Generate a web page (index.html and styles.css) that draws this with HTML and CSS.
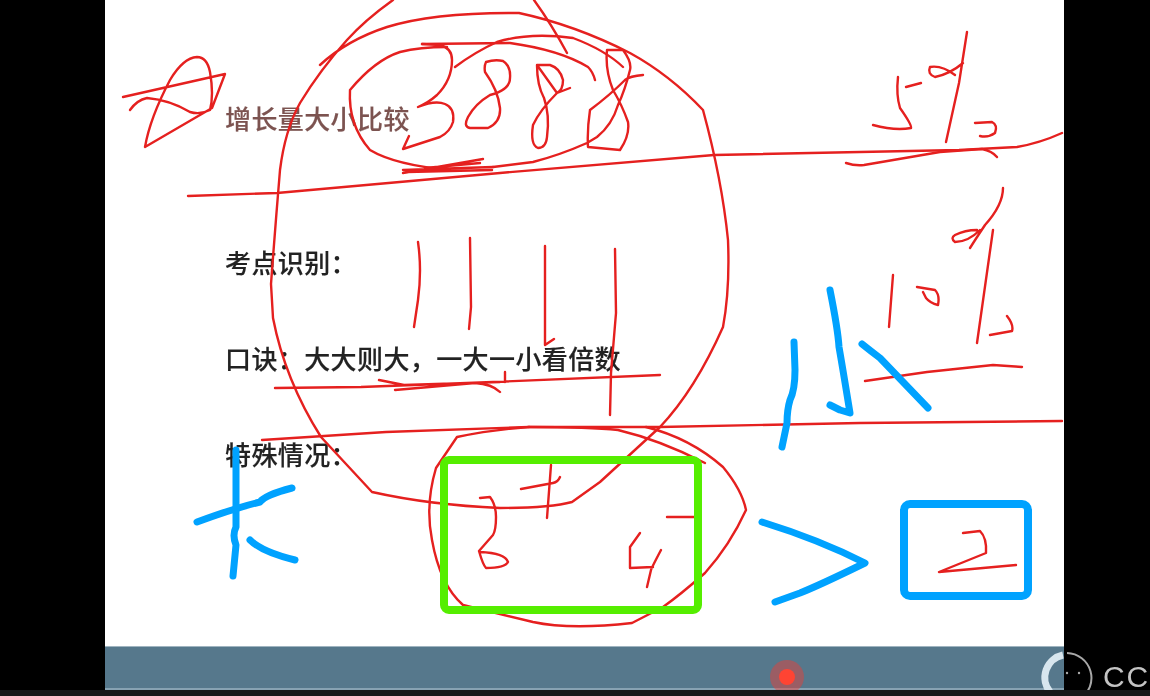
FILE: index.html
```html
<!DOCTYPE html>
<html lang="zh">
<head>
<meta charset="utf-8">
<title>增长量大小比较</title>
<link rel="stylesheet" href="styles.css">
</head>
<body>
<div class="stage">
  <main class="slide">
    <p class="line line-title">增长量大小比较</p>
    <p class="line">考点识别：</p>
    <p class="line">口诀：大大则大，一大一小看倍数</p>
    <p class="line">特殊情况：</p>
  </main>
  <div class="bar"></div>
</div>
<div class="strip"></div>
<div class="cc">CC</div>
<svg class="ink" viewBox="0 0 1150 696" width="1150" height="696" aria-hidden="true">
  <g class="red">
    <path d="M123 97L225 74L212 108L145 147Q150 118 170 80Q183 58 197 57Q207 57 210 72Q214 95 210 110Q200 115 190 112Q170 100 147 98Q137 100 130 110"/>
    <path d="M393 0Q365 20 347 40Q320 70 300 103Q285 130 280 170Q275 230 271 284L273 318Q285 380 321 437L372 492Q430 505 500 508Q550 508 572 502L600 482L660 427Q695 390 723 327Q730 290 728 240Q722 180 703 110Q670 75 630 53Q575 25 519 13Q435 12 387 27Q347 40 320 65"/>
    <path d="M534 0Q552 25 567 53"/>
    <path d="M422 44L510 43Q560 50 588 67Q593 72 595 80"/>
    <path d="M455 67Q475 52 497 42Q530 32 573 38Q605 50 623 67"/>
    <path d="M422 44L440 45Q452 48 452 60Q452 80 437 95Q428 103 418 107Q435 100 445 104Q455 108 453 122Q450 132 440 137L403 149L409 136"/>
    <path d="M447 47Q420 47 400 52Q375 60 350 90Q348 125 370 150Q395 165 450 170"/>
    <path d="M486 62Q495 59 503 61Q511 66 510 78Q510 90 490 95Q475 104 468 117Q463 127 470 128L488 128Q501 122 500 108Q498 90 485 72Q484 66 486 62Z"/>
    <path d="M537 65L550 65Q560 68 563 80Q563 90 557 93L570 88M557 93Q540 110 533 125Q530 145 538 148Q546 148 547 137Q550 115 544 98Q537 85 537 65Z"/>
    <path d="M643 75Q630 76 625 80Q610 95 590 110Q587 130 588 147L620 150Q630 135 628 122Q622 105 613 90Q605 70 607 50L623 50Q632 62 630 70Q625 90 618 105Q612 125 597 137L587 143Q560 155 533 162L493 167"/>
    <path d="M403 173L483 159M403 170L493 167M407 172L492 170M425 168L480 163"/>
    <path d="M188 196L277 193L500 173L714 155L959 150L1017 147Q1040 143 1062 133"/>
    <path d="M846 163Q855 166 864 165L940 152L982 149Q992 151 997 157"/>
    <path d="M898 77Q896 95 900 108Q912 125 911 128Q895 131 873 125M906 87L921 83"/>
    <path d="M967 32L959 83L946 142M963 63Q950 74 935 77Q927 74 930 67Q942 65 955 75"/>
    <path d="M975 123L992 122Q998 125 995 133Q988 138 980 136"/>
    <path d="M1003 188Q1003 205 985 225Q975 240 970 248M980 230Q968 242 955 242Q950 238 955 235Q965 230 977 230"/>
    <path d="M993 230L977 343M893 275L889 327M917 287L935 290Q940 295 938 305Q930 303 926 298L923 292M1007 316Q1014 325 1012 331L990 335"/>
    <path d="M865 381L927 372L993 365L1022 367"/>
    <path d="M418 242Q422 270 418 300L414 327M470 238L471 307L469 329M545 246L545 345L554 339M615 249L616 313L611 373L610 415"/>
    <path d="M275 388L361 387L493 382L660 375M379 380L404 385L500 382M395 390L475 383Q492 384 500 392M505 372L505 382"/>
    <path d="M262 440L386 432L529 427L660 427L860 423L1062 421"/>
    <path d="M529 427Q590 427 618 430Q660 440 705 463"/>
    <path d="M646 427Q690 438 723 467Q742 490 746 510Q730 545 705 573Q680 595 663 607L632 623Q570 630 533 622L463 605Q440 585 432 540Q425 505 436 468L457 437Q490 430 529 427"/>
    <path d="M480 498L490 497Q496 505 496 517Q496 530 493 535L479 551Q483 565 486 568Q505 568 508 562Q505 553 480 552"/>
    <path d="M521 489L553 483Q558 482 560 477M551 465L547 518"/>
    <path d="M640 533L630 547L630 568L653 567M661 550Q652 567 651 570L647 587M667 517L694 517"/>
    <path d="M963 533L980 531Q987 538 986 553L939 572L1016 565"/>
  </g>
  <rect class="box box-green" x="444" y="460" width="254" height="150" rx="5"/>
  <rect class="box box-blue" x="904" y="504" width="124" height="92" rx="6"/>
  <g class="blue">
    <path d="M794 342L795 370Q795 390 790 400Q787 410 787 423L782 447"/>
    <path d="M830 290Q838 330 839 347Q843 370 850 413L840 410L830 405"/>
    <path d="M862 344Q872 352 880 358L928 408"/>
    <path d="M236 450L236 527Q232 535 236 545L233 576"/>
    <path d="M197 522Q235 508 260 502Q265 495 292 488"/>
    <path d="M250 540Q262 552 295 560"/>
    <path d="M762 522Q820 540 865 563Q820 585 800 593L775 602"/>
  </g>
  <circle class="dot-halo" cx="787" cy="677" r="17"/>
  <circle class="dot" cx="787" cy="677" r="8"/>
  <path class="ring-thin" d="M1067 653A25 25 0 0 1 1080 699"/>
  <path class="ring-thick" d="M1063 655A23 23 0 0 0 1050 692"/>
  <circle class="eye" cx="1067" cy="673" r="1.2"/>
  <circle class="eye" cx="1079" cy="673" r="1.2"/>
  <rect class="strip-mask" x="0" y="690" width="1150" height="6"/>
</svg>
</body>
</html>
```

FILE: styles.css
```css
html, body {
  margin: 0;
  height: 696px;
  overflow: hidden;
  background: #000;
}

body {
  position: relative;
  display: flex;
  flex-direction: column;
  font-family: "Noto Sans CJK SC", "Noto Sans", sans-serif;
}

.stage {
  width: 959px;
  height: 690px;
  margin-left: 105px;
  display: flex;
  flex-direction: column;
}

.slide {
  flex: 1;
  background: #fff;
  padding: 70px 0 0 120px;
}

.line {
  margin: 0;
  height: 96px;
  line-height: 96px;
  font-size: 26px;
  font-weight: 500;
  letter-spacing: 0.4px;
  color: #222;
  -webkit-text-stroke: 0.15px currentColor;
  filter: blur(0.6px);
}

.line-title {
  margin-bottom: 48px;
  color: #7c5350;
}

.bar {
  height: 44px;
  background: #56788c;
  border-top: 1px solid #9fb4c0;
  border-bottom: 2px solid #87a2b2;
  box-sizing: border-box;
}

.strip {
  height: 6px;
  background: #181818;
}

.cc {
  position: absolute;
  left: 1103px;
  top: 655px;
  font-family: "Liberation Sans", sans-serif;
  font-size: 30px;
  line-height: 44px;
  color: #c4c4c4;
  letter-spacing: 1.8px;
  filter: blur(0.5px);
}

.ink {
  position: absolute;
  left: 0;
  top: 0;
  pointer-events: none;
  filter: blur(0.3px);
}

.red path {
  fill: none;
  stroke: #e5201f;
  stroke-width: 2.4;
  stroke-linejoin: round;
  stroke-linecap: round;
}

.blue path {
  fill: none;
  stroke: #00a2ff;
  stroke-width: 7;
  stroke-linejoin: round;
  stroke-linecap: round;
}

.box {
  fill: none;
  stroke-width: 8;
}

.box-green {
  stroke: #55ee00;
}

.box-blue {
  stroke: #00a2ff;
}

.dot {
  fill: #ff4433;
}

.dot-halo {
  fill: rgba(240, 60, 50, 0.45);
}

.ring-thin {
  fill: none;
  stroke: #a8a8a8;
  stroke-width: 2;
}

.ring-thick {
  fill: none;
  stroke: #d8e6ee;
  stroke-width: 7;
}

.eye {
  fill: #aaa;
}

.strip-mask {
  fill: #181818;
}
```
